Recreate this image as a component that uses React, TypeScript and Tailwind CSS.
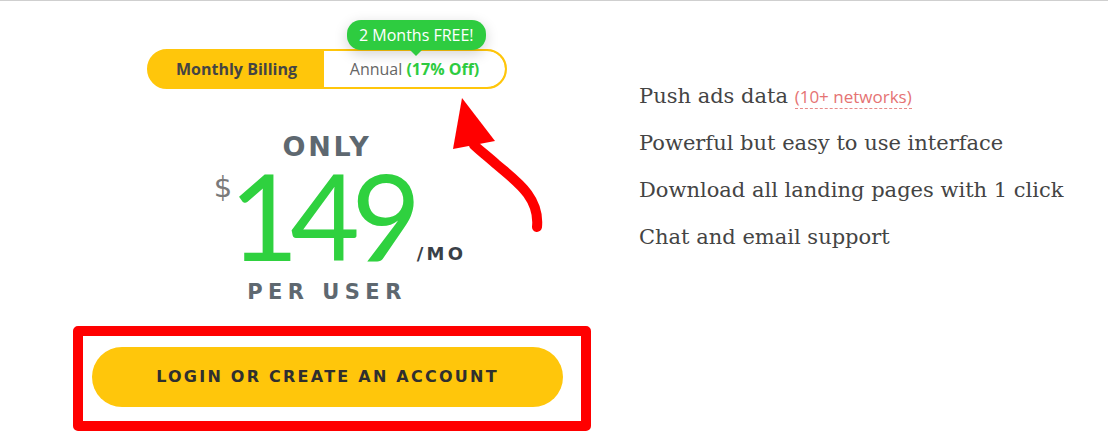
import React from "react";

const FEATURES = [
  "Powerful but easy to use interface",
  "Download all landing pages with 1 click",
  "Chat and email support",
];

function BillingToggle() {
  return (
    <div className="relative">
      {/* badge over the annual side */}
      <div className="absolute left-[200px] top-[-29px] z-10">
        <div className="relative rounded-[14px] bg-[#2ecc40] px-[12px] py-[5px] text-[16px] leading-[20px] text-white shadow-[0_4px_14px_rgba(0,0,0,0.18)] [font-family:'Open_Sans',sans-serif]">
          2 Months FREE!
          <div className="absolute left-1/2 top-full h-0 w-0 -translate-x-1/2 border-x-[6px] border-t-[6px] border-x-transparent border-t-[#2ecc40]" />
        </div>
      </div>
      <div className="flex h-[40px] w-[360px] overflow-hidden rounded-full border-2 border-[#ffc60b] bg-[#ffc60b] [font-family:'Open_Sans',sans-serif] text-[16px]">
        <div className="flex w-[175px] items-center justify-center font-bold text-[#444]">Monthly Billing</div>
        <div className="flex flex-1 items-center justify-center rounded-r-full bg-white text-[#666]">
          Annual&nbsp;<span className="font-bold text-[#2ecc40]">(17% Off)</span>
        </div>
      </div>
    </div>
  );
}

function Price() {
  return (
    <div className="flex flex-col items-center [font-family:'DejaVu_Sans',sans-serif]">
      <div className="mt-[44px] text-[27px] font-bold leading-none tracking-[0.1em] text-[#5e6870]">ONLY</div>
      <div className="ml-[26px] mt-[5px] flex items-start">
        <span className="mt-[8px] mr-[-3px] text-[29px] leading-none text-[#7a7a7a]">$</span>
        <span className="text-[120px] leading-[100px] tracking-[-0.07em] text-[#2fd13f] [font-family:Lato,sans-serif]">149</span>
        <span className="mt-[80px] ml-[4px] text-[18px] font-semibold leading-none tracking-[0.18em] text-[#3a4047]">/MO</span>
      </div>
      <div className="mt-[17px] text-[21px] font-bold leading-none tracking-[0.26em] text-[#5e6870]">PER USER</div>
    </div>
  );
}

export default function App() {
  return (
    <div className="relative h-[441px] w-[1108px] overflow-hidden border-t border-[#cfcfcf] bg-white">
      <div className="flex pl-[30px]">
        <div className="flex w-[594px] flex-col items-center pt-[48px]">
          <BillingToggle />
          <Price />
          <div className="ml-[10px] mt-[23px] rounded-[5px] border-[10px] border-[#ff0000] pb-[14px] pl-[9px] pr-[18px] pt-[11px]">
            <button className="flex h-[60px] w-[471px] items-center justify-center rounded-full bg-[#ffc60b] text-[16px] font-bold tracking-[0.14em] text-[#2f2f2f] [font-family:'DejaVu_Sans',sans-serif]">
              LOGIN OR CREATE AN ACCOUNT
            </button>
          </div>
        </div>
        <div className="pl-[15px] pt-[72px] text-[21px] leading-[47px] text-[#444] [font-family:'DejaVu_Serif',serif]">
          <div>
            Push ads data{" "}
            <span className="border-b border-dashed border-[#e88a8a] text-[17px] leading-none text-[#e57373] [font-family:'Open_Sans',sans-serif]">
              (10+ networks)
            </span>
          </div>
          {FEATURES.map((f) => (
            <div key={f}>{f}</div>
          ))}
        </div>
      </div>

      {/* red annotation arrow */}
      <svg className="pointer-events-none absolute left-0 top-0" width="1108" height="441">
        <path d="M537 226 C540 196 516 180 496 163 C486 154 479 149 474 144" fill="none" stroke="#ff0000" strokeWidth="10" strokeLinecap="round" />
        <polygon points="462,97 453,148 495,140" fill="#ff0000" />
      </svg>
    </div>
  );
}
